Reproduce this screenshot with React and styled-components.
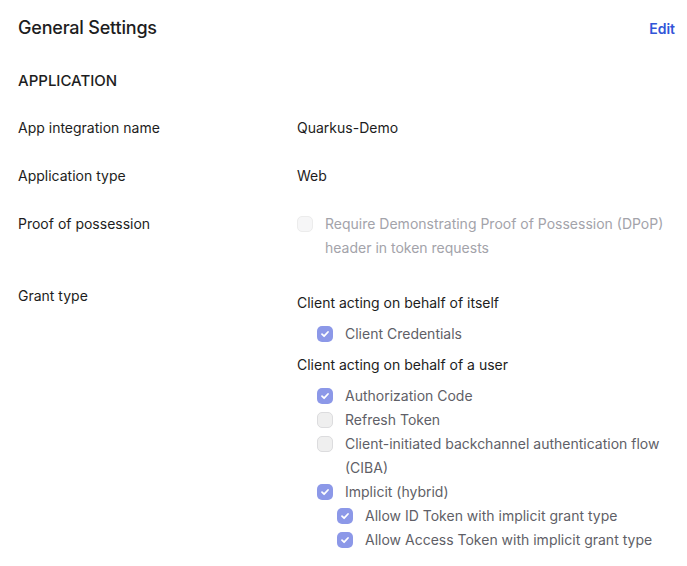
import React from "react";
import styled, { createGlobalStyle } from "styled-components";

const GlobalStyle = createGlobalStyle`
	body {
		margin: 0;
		background: #ffffff;
		font-family: Inter, "Noto Sans", sans-serif;
		color: #1d1d21;
		-webkit-font-smoothing: antialiased;
	}
`;

const Page = styled.div`
	width: 687px;
	box-sizing: border-box;
	padding: 16px 12px 0 18px;
`;

const Header = styled.div`
	display: flex;
	justify-content: space-between;
	align-items: center;
	height: 24px;
`;

const Title = styled.h2`
	margin: 0;
	font-size: 18px;
	font-weight: 500;
	letter-spacing: -0.2px;
	line-height: 24px;
`;

const EditLink = styled.a`
	font-size: 14px;
	font-weight: 600;
	color: #3155d8;
	text-decoration: none;
	cursor: pointer;
`;

const SectionTitle = styled.h3`
	margin: 29px 0 23px;
	font-size: 15px;
	font-weight: 500;
	line-height: 24px;
	text-transform: uppercase;
`;

const Rows = styled.div`
	display: flex;
	flex-direction: column;
	gap: 24px;
`;

const Row = styled.div`
	display: grid;
	grid-template-columns: 279px 1fr;
	font-size: 14px;
	line-height: 24px;
`;

const Label = styled.div`
	color: #1d1d21;
`;

const Value = styled.div`
	color: #1d1d21;
	padding-top: ${(p) => (p.$offset ? "6px" : "0")};
`;

const GroupHeading = styled.div`
	margin-top: ${(p) => p.$gap || 0}px;
`;

const List = styled.div`
	display: flex;
	flex-direction: column;
	margin-top: ${(p) => p.$gap || 0}px;
	padding-left: ${(p) => p.$indent ?? 20}px;
`;

const Option = styled.label`
	display: flex;
	align-items: flex-start;
	gap: 12px;
	color: ${(p) => (p.$disabled ? "#a3a3aa" : "#5f5f67")};
	padding-left: ${(p) => (p.$nested ? 20 : 0)}px;
`;

const Box = styled.span`
	flex: none;
	width: 16px;
	height: 16px;
	margin-top: 4px;
	box-sizing: border-box;
	border-radius: 5px;
	display: flex;
	align-items: center;
	justify-content: center;
	background: ${(p) => (p.$checked ? "#8c98e8" : p.$disabled ? "#f6f6f7" : "#efefef")};
	border: ${(p) => (p.$checked ? "none" : p.$disabled ? "1px solid #ececec" : "1px solid #dcdcde")};
`;

const Check = () => (
	<svg width="10" height="10" viewBox="0 0 10 10" fill="none">
		<path d="M2 5.2 L4.1 7.2 L8 3" stroke="#fff" strokeWidth="1.8" strokeLinecap="round" strokeLinejoin="round" />
	</svg>
);

const Checkbox = ({ checked, disabled, nested, children }) => (
	<Option $disabled={disabled} $nested={nested}>
		<Box $checked={checked} $disabled={disabled}>{checked && <Check />}</Box>
		<span>{children}</span>
	</Option>
);

const App = () => {
	return (
		<Page>
			<GlobalStyle />
			<Header>
				<Title>General Settings</Title>
				<EditLink>Edit</EditLink>
			</Header>
			<SectionTitle>Application</SectionTitle>
			<Rows>
				<Row>
					<Label>App integration name</Label>
					<Value>Quarkus-Demo</Value>
				</Row>
				<Row>
					<Label>Application type</Label>
					<Value>Web</Value>
				</Row>
				<Row>
					<Label>Proof of possession</Label>
					<Value>
						<List $indent={0}>
							<Checkbox disabled>
								Require Demonstrating Proof of Possession (DPoP) header in token requests
							</Checkbox>
						</List>
					</Value>
				</Row>
				<Row>
					<Label>Grant type</Label>
					<Value $offset>
						<GroupHeading $gap={1}>Client acting on behalf of itself</GroupHeading>
						<List $gap={7}>
							<Checkbox checked>Client Credentials</Checkbox>
						</List>
						<GroupHeading $gap={7}>Client acting on behalf of a user</GroupHeading>
						<List $gap={7}>
							<Checkbox checked>Authorization Code</Checkbox>
							<Checkbox>Refresh Token</Checkbox>
							<Checkbox>Client-initiated backchannel authentication flow (CIBA)</Checkbox>
							<Checkbox checked>Implicit (hybrid)</Checkbox>
							<Checkbox checked nested>Allow ID Token with implicit grant type</Checkbox>
							<Checkbox checked nested>Allow Access Token with implicit grant type</Checkbox>
						</List>
					</Value>
				</Row>
			</Rows>
		</Page>
	);
};

export default App;
